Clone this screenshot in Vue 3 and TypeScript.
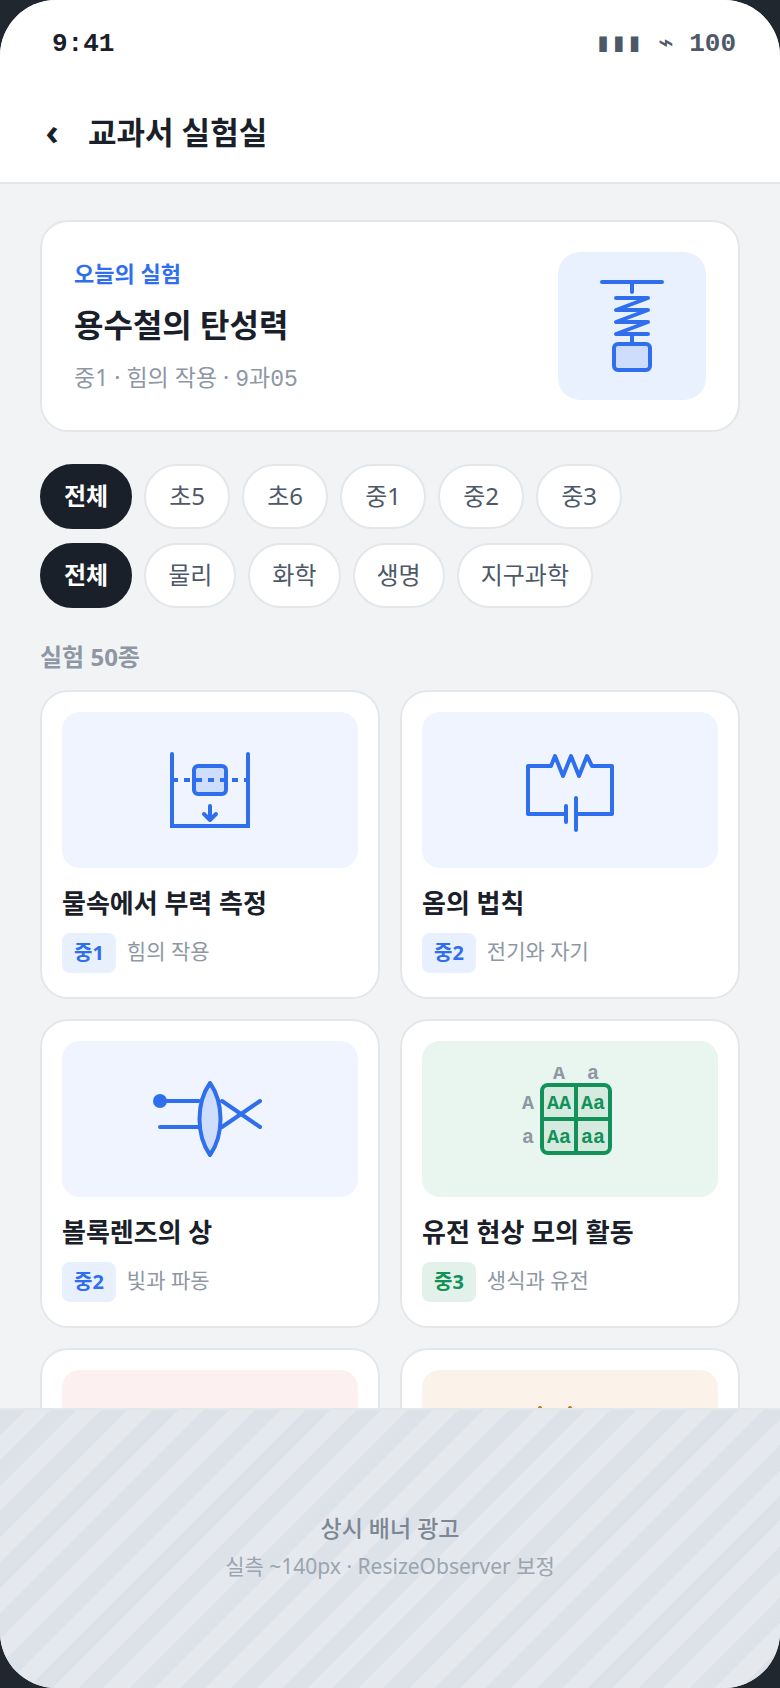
<script setup lang="ts">
import { ref } from 'vue'

type Tone = 'blue' | 'green' | 'red' | 'amber'
type Icon = 'buoyancy' | 'circuit' | 'lens' | 'punnett' | 'none' | 'wave'

interface Experiment {
  id: number
  icon: Icon
  tone: Tone
  title?: string
  grade?: string
  unit?: string
}

const grades: string[] = ['전체', '초5', '초6', '중1', '중2', '중3']
const subjects: string[] = ['전체', '물리', '화학', '생명', '지구과학']
const grade = ref('전체')
const subject = ref('전체')

const experiments: Experiment[] = [
  { id: 1, icon: 'buoyancy', tone: 'blue', title: '물속에서 부력 측정', grade: '중1', unit: '힘의 작용' },
  { id: 2, icon: 'circuit', tone: 'blue', title: '옴의 법칙', grade: '중2', unit: '전기와 자기' },
  { id: 3, icon: 'lens', tone: 'blue', title: '볼록렌즈의 상', grade: '중2', unit: '빛과 파동' },
  { id: 4, icon: 'punnett', tone: 'green', title: '유전 현상 모의 활동', grade: '중3', unit: '생식과 유전' },
  { id: 5, icon: 'none', tone: 'red' },
  { id: 6, icon: 'wave', tone: 'amber' },
]
</script>

<template>
  <div class="screen">
    <div class="status">
      <span>9:41</span>
      <span class="status-right">▮▮▮ ⌁ 100</span>
    </div>

    <header class="topbar">
      <button class="back" type="button">‹</button>
      <h1>교과서 실험실</h1>
    </header>

    <main class="content">
      <section class="hero">
        <div class="hero-text">
          <p class="hero-label">오늘의 실험</p>
          <h2>용수철의 탄성력</h2>
          <p class="hero-meta">중1 · 힘의 작용 · <span class="mono">9과05</span></p>
        </div>
        <div class="hero-art">
          <svg viewBox="0 0 148 148" width="148" height="148" class="line blue" aria-hidden="true">
            <path d="M44 30H104M74 30V40M58 46H90L58 58H90L58 70H90L58 82H90M74 82V92" />
            <rect class="tint" x="56" y="92" width="36" height="26" rx="4" />
          </svg>
        </div>
      </section>

      <div class="filters">
        <div class="chips">
          <button
            v-for="g in grades"
            :key="g"
            type="button"
            class="chip"
            :class="{ active: g === grade }"
            :aria-pressed="g === grade"
            @click="grade = g"
          >{{ g }}</button>
        </div>
        <div class="chips">
          <button
            v-for="s in subjects"
            :key="s"
            type="button"
            class="chip"
            :class="{ active: s === subject }"
            :aria-pressed="s === subject"
            @click="subject = s"
          >{{ s }}</button>
        </div>
      </div>

      <h3 class="count">실험 50종</h3>

      <div class="grid">
        <article v-for="e in experiments" :key="e.id" class="card" :class="e.tone">
          <div class="thumb">
            <svg viewBox="0 0 128 104" width="128" height="104" class="line" aria-hidden="true">
              <g v-if="e.icon === 'buoyancy'">
                <path class="miter" d="M26 16V88H102V16" />
                <rect class="tint" x="48" y="28" width="32" height="28" rx="4" />
                <path class="dash" d="M26 42H102" />
                <path d="M64 68V82M58 76L64 82L70 76" />
              </g>
              <g v-else-if="e.icon === 'circuit'">
                <path d="M60 76H22V28H45L49 18L57 38L65 18L73 38L81 18L86 28H106V76H70" />
                <path d="M60 68V84M70 60V92" />
              </g>
              <g v-else-if="e.icon === 'lens'">
                <path d="M14 34H53M14 60H53M76 34L114 60M76 60L114 34" />
                <circle class="solid" cx="14" cy="34" r="7" />
                <path class="tint" d="M64 16C50 36 50 68 64 88C78 68 78 36 64 16Z" />
              </g>
              <g v-else-if="e.icon === 'punnett'">
                <rect class="tint" x="36" y="18" width="68" height="68" rx="6" />
                <path d="M70 18V86M36 52H104" />
                <g class="allele">
                  <text x="53" y="12">A</text>
                  <text x="87" y="12">a</text>
                  <text x="22" y="42">A</text>
                  <text x="22" y="76">a</text>
                </g>
                <g class="genotype">
                  <text x="53" y="42">AA</text>
                  <text x="87" y="42">Aa</text>
                  <text x="53" y="76">Aa</text>
                  <text x="87" y="76">aa</text>
                </g>
              </g>
              <path v-else-if="e.icon === 'wave'" d="M24 52L34 12L49 80L64 12L79 80L90 40" />
            </svg>
          </div>
          <h4 v-if="e.title">{{ e.title }}</h4>
          <div v-if="e.grade" class="meta">
            <span class="tag">{{ e.grade }}</span>
            <span class="unit">{{ e.unit }}</span>
          </div>
        </article>
      </div>
    </main>

    <aside class="banner">
      <strong>상시 배너 광고</strong>
      <span>실측 ~140px · ResizeObserver 보정</span>
    </aside>
  </div>
</template>

<style>
body {
  margin: 0;
  background: #20272e;
}
</style>

<style scoped>
.screen {
  display: flex;
  flex-direction: column;
  height: 100vh;
  overflow: hidden;
  border-radius: 56px;
  background: #f2f3f5;
  color: #1a2029;
  font-family: "Noto Sans", "Noto Sans CJK KR", sans-serif;
}
.screen * {
  box-sizing: border-box;
}
h1, h2, h3, h4, p {
  margin: 0;
}
button {
  font-family: inherit;
  cursor: pointer;
}
.status {
  display: flex;
  justify-content: space-between;
  flex: none;
  padding: 26px 44px 0 52px;
  background: #fff;
  font: 700 26px/36px "Liberation Mono", "DejaVu Sans Mono", monospace;
}
.status-right {
  color: #4d5968;
}
.topbar {
  display: flex;
  align-items: center;
  gap: 28px;
  flex: none;
  padding: 48px 44px 28px;
  border-bottom: 2px solid #e4e7ea;
  background: #fff;
}
.back {
  width: 16px;
  padding: 0;
  border: 0;
  background: none;
  color: inherit;
  font-size: 36px;
  font-weight: 700;
  line-height: 44px;
}
.topbar h1 {
  font-size: 31px;
  font-weight: 700;
  line-height: 44px;
}
.content {
  flex: 1;
  min-height: 0;
  padding: 36px 40px 0;
  overflow-y: auto;
  scrollbar-width: none;
}
.hero {
  display: flex;
  align-items: center;
  justify-content: space-between;
  padding: 30px 32px;
  border: 2px solid #e4e7ea;
  border-radius: 28px;
  background: #fff;
}
.hero-label {
  color: #2f6fed;
  font-size: 22px;
  font-weight: 700;
  line-height: 32px;
}
.hero h2 {
  margin: 14px 0;
  font-size: 32px;
  font-weight: 700;
  line-height: 44px;
}
.hero-meta {
  color: #8e97a4;
  font-size: 23px;
  line-height: 32px;
}
.mono {
  font-family: "Liberation Mono", "Noto Sans CJK KR", monospace;
}
.hero-art {
  flex: none;
  height: 148px;
  border-radius: 22px;
  background: #eaf1fe;
}
.line {
  display: block;
  fill: none;
  stroke: currentColor;
  stroke-width: 4;
  stroke-linecap: round;
  stroke-linejoin: round;
}
.blue {
  --tint: #cdddfb;
  --thumb: #eff4ff;
  --tag: #e8f0fe;
  --ink: #2f6fed;
  color: #2f6fed;
}
.green {
  --tint: #d5ebdf;
  --thumb: #e9f5ef;
  --tag: #e2f2ea;
  --ink: #129158;
}
.red {
  --thumb: #fdf0f0;
  --ink: #d64545;
}
.amber {
  --thumb: #fbf3e9;
  --ink: #c27a12;
}
.tint {
  fill: var(--tint);
}
.solid {
  fill: currentColor;
  stroke: none;
}
.miter {
  stroke-linejoin: miter;
}
.dash {
  stroke-linecap: butt;
  stroke-dasharray: 6 6;
}
.allele,
.genotype {
  stroke: none;
  font: 700 20px "Liberation Mono", monospace;
  text-anchor: middle;
}
.allele {
  fill: #8e97a4;
}
.genotype {
  fill: currentColor;
}
.filters {
  display: flex;
  flex-direction: column;
  gap: 14px;
  margin-top: 32px;
}
.chips {
  display: flex;
  flex-wrap: wrap;
  gap: 12px;
}
.chip {
  min-width: 86px;
  height: 65px;
  padding: 0 22px 2px;
  border: 2px solid #e4e7ea;
  border-radius: 33px;
  background: #fff;
  color: #4d5968;
  font-size: 24px;
  line-height: 36px;
}
.chip.active {
  border-color: #1a2029;
  background: #1a2029;
  color: #fff;
  font-weight: 700;
}
.count {
  margin: 31px 0 15px;
  color: #8e97a4;
  font-size: 24px;
  font-weight: 700;
  line-height: 36px;
}
.grid {
  display: grid;
  grid-template-columns: 1fr 1fr;
  gap: 20px;
}
.card {
  padding: 20px 20px 24px;
  border: 2px solid #e4e7ea;
  border-radius: 28px;
  background: #fff;
  color: #1a2029;
}
.thumb {
  display: flex;
  align-items: center;
  justify-content: center;
  height: 156px;
  border-radius: 18px;
  background: var(--thumb);
  color: var(--ink);
}
.card h4 {
  margin: 16px 0 11px;
  font-size: 26px;
  font-weight: 700;
  line-height: 38px;
}
.meta {
  display: flex;
  align-items: flex-start;
  gap: 11px;
}
.tag {
  padding: 0 12px;
  border-radius: 8px;
  background: var(--tag);
  color: var(--ink);
  font-size: 20px;
  font-weight: 700;
  line-height: 40px;
}
.unit {
  color: #8e97a4;
  font-size: 21px;
  line-height: 36px;
}
.banner {
  display: flex;
  flex-direction: column;
  align-items: center;
  justify-content: center;
  gap: 4px;
  flex: none;
  min-height: 280px;
  padding-bottom: 4px;
  border-top: 2px solid #e4e7ea;
  background: repeating-linear-gradient(135deg, #dde1e8 0 18px, #e5e8ed 18px 36px);
}
.banner strong {
  color: #7b8794;
  font-size: 23px;
  font-weight: 500;
  line-height: 34px;
}
.banner span {
  color: #9aa5b1;
  font-size: 21px;
  line-height: 34px;
}
</style>
